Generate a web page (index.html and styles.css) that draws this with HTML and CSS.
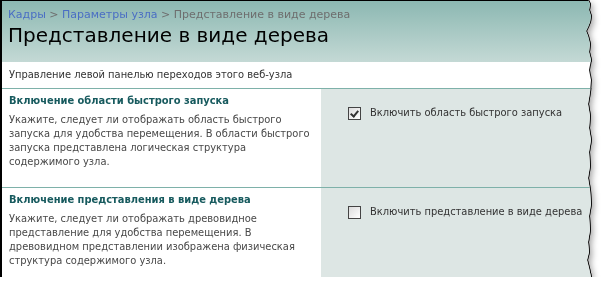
FILE: index.html
```html
<!DOCTYPE html>
<html lang="ru">
<head>
  <meta charset="UTF-8">
  <title>Представление в виде дерева</title>
  <link rel="stylesheet" href="styles.css">
</head>
<body>

  <div class="sheet">
    <div class="edge">
      <div class="page">
        <div class="header">
          <div class="crumbs">
            <a href="#">Кадры</a> &gt; <a href="#">Параметры узла</a> &gt; Представление в виде дерева
          </div>
          <h1>Представление в виде дерева</h1>
        </div>

        <div class="intro">Управление левой панелью переходов этого веб-узла</div>

        <div class="section">
          <div class="info">
            <h2>Включение области быстрого запуска</h2>
            <p>Укажите, следует ли отображать область быстрого запуска для удобства перемещения. В области быстрого запуска представлена логическая структура содержимого узла.</p>
          </div>
          <div class="control">
            <label class="check">
              <input type="checkbox" checked>
              <span class="box"></span>
              Включить область быстрого запуска
            </label>
          </div>
        </div>

        <div class="section">
          <div class="info">
            <h2>Включение представления в виде дерева</h2>
            <p>Укажите, следует ли отображать древовидное представление для удобства перемещения. В древовидном представлении изображена физическая структура содержимого узла.</p>
          </div>
          <div class="control">
            <label class="check">
              <input type="checkbox">
              <span class="box"></span>
              Включить представление в виде дерева
            </label>
          </div>
        </div>
      </div>
    </div>
  </div>

</body>
</html>
```

FILE: styles.css
```css
body {
  margin: 0;
  padding: 0;
  background-color: #fff;
  font-family: 'DejaVu Sans Condensed', 'DejaVu Sans', sans-serif;
  font-size: 11px;
}

/* shadow + torn edge */
.sheet {
  width: 600px;
  filter: drop-shadow(2px 3px 3px rgba(0, 0, 0, 0.35));
}

.edge {
  filter: drop-shadow(1px 0 0 #111);
}

.page {
  width: 596px;
  height: 276px;
  border-left: 2px solid #000;
  border-top: 1px solid #000;
  background-color: #fff;
  clip-path: polygon(0 0, 588px 0, 590px 4px, 589px 10px, 591px 16px, 590px 22px, 588px 27px, 586px 31px, 588px 36px, 590px 44px, 589px 52px, 591px 60px, 589px 70px, 591px 80px, 590px 92px, 588px 104px, 590px 116px, 589px 128px, 591px 140px, 589px 152px, 590px 166px, 588px 178px, 590px 190px, 591px 204px, 589px 216px, 590px 230px, 588px 242px, 589px 252px, 587px 260px, 589px 268px, 591px 277px, 0 277px);
}

.header {
  height: 61px;
  padding: 6px 0 0 6px;
  box-sizing: border-box;
  background: linear-gradient(to bottom, #8cb8b2, #c4d9d5);
}

.crumbs {
  font-family: 'DejaVu Sans', sans-serif;
  font-size: 11px;
  color: #6e6e6e;
  line-height: 16px;
}

.crumbs a {
  color: #4a6ec4;
  text-decoration: none;
}

h1 {
  margin: 0;
  font-family: 'DejaVu Sans', sans-serif;
  font-weight: normal;
  font-size: 20px;
  line-height: 24px;
  color: #000;
}

.intro {
  height: 26px;
  padding: 0 7px;
  line-height: 26px;
  color: #333;
  border-bottom: 1px solid #7eb1a9;
}

.section {
  display: grid;
  grid-template-columns: 319px 1fr;
  border-bottom: 1px solid #7eb1a9;
}

.section:last-child {
  border-bottom: none;
  height: 90px;
}

.info {
  padding: 5px 7px 18px 7px;
}

h2 {
  margin: 0;
  font-size: 11px;
  font-weight: bold;
  line-height: 14px;
  color: #175a5e;
}

p {
  margin: 5px 0 0 0;
  line-height: 14px;
  color: #484848;
}

.control {
  background-color: #dde6e4;
  padding: 17px 0 0 27px;
}

.check {
  display: flex;
  align-items: center;
  gap: 9px;
  color: #333;
  line-height: 14px;
}

.check input {
  display: none;
}

.box {
  width: 11px;
  height: 11px;
  border: 1px solid #444;
  background: linear-gradient(135deg, #dcdcdc, #fff);
  position: relative;
}

.check input:checked + .box::after {
  content: '';
  position: absolute;
  left: 3px;
  top: 1px;
  width: 3px;
  height: 6px;
  border-right: 2px solid #333;
  border-bottom: 2px solid #333;
  transform: rotate(40deg);
}
```
